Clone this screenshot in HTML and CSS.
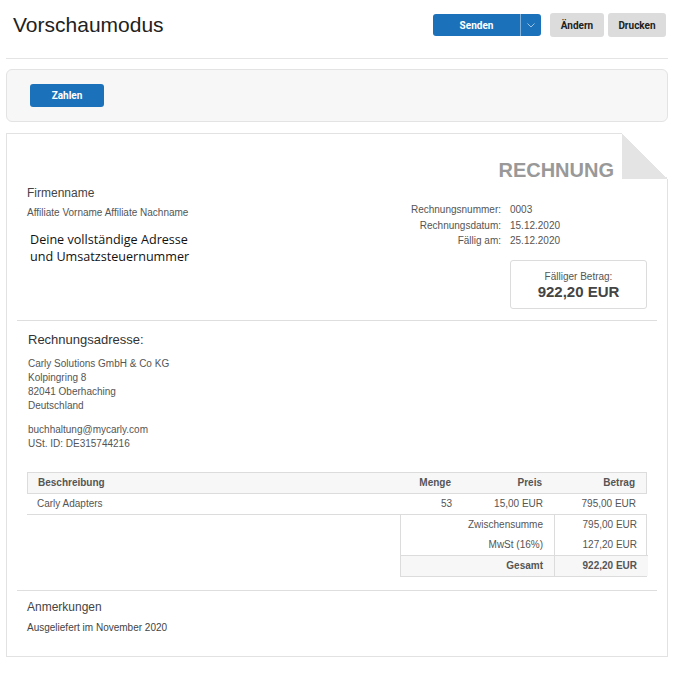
FILE: index.html
```html
<!DOCTYPE html>
<html lang="de">
<head>
<meta charset="utf-8">
<title>Vorschaumodus</title>
<link rel="stylesheet" href="styles.css">
</head>
<body>
<div class="page">
  <header class="topbar">
    <h1 class="title">Vorschaumodus</h1>
    <div class="actions">
      <div class="split">
        <button class="btn btn-primary split-main">Senden</button>
        <button class="btn btn-primary split-caret" aria-label="Mehr">
          <svg width="8" height="5" viewBox="0 0 8 5"><polyline points="0.5,0.5 4,4 7.5,0.5" fill="none" stroke="#9cc3e6" stroke-width="1"/></svg>
        </button>
      </div>
      <button class="btn btn-gray btn-aendern">Ändern</button>
      <button class="btn btn-gray btn-drucken">Drucken</button>
    </div>
  </header>

  <div class="paybar">
    <button class="btn btn-primary btn-pay">Zahlen</button>
  </div>

  <div class="invoice">
    <div class="fold"></div>
    <section class="sec sec-head">
      <div class="doc-title">RECHNUNG</div>
      <div class="head-cols">
        <div class="sender">
          <div class="company">Firmenname</div>
          <div class="affiliate">Affiliate Vorname Affiliate Nachname</div>
          <div class="address">Deine vollständige Adresse<br>und Umsatzsteuernummer</div>
        </div>
        <div class="meta">
          <div class="meta-label">Rechnungsnummer:</div><div class="meta-val">0003</div>
          <div class="meta-label">Rechnungsdatum:</div><div class="meta-val">15.12.2020</div>
          <div class="meta-label">Fällig am:</div><div class="meta-val">25.12.2020</div>
          <div class="due">
            <div class="due-label">Fälliger Betrag:</div>
            <div class="due-amount">922,20 EUR</div>
          </div>
        </div>
      </div>
    </section>

    <section class="sec sec-bill">
      <h2 class="sec-title">Rechnungsadresse:</h2>
      <div class="bill-lines">Carly Solutions GmbH &amp; Co KG<br>Kolpingring 8<br>82041 Oberhaching<br>Deutschland</div>
      <div class="bill-lines bill-extra">buchhaltung@mycarly.com<br>USt. ID: DE315744216</div>

      <div class="items">
        <div class="row row-head">
          <div class="c c-desc">Beschreibung</div>
          <div class="c c-num">Menge</div>
          <div class="c c-num">Preis</div>
          <div class="c c-num">Betrag</div>
        </div>
        <div class="row row-item">
          <div class="c c-desc">Carly Adapters</div>
          <div class="c c-num">53</div>
          <div class="c c-num">15,00 EUR</div>
          <div class="c c-num">795,00 EUR</div>
        </div>
      </div>
      <div class="totals">
        <div class="t-label">Zwischensumme</div><div class="t-val">795,00 EUR</div>
        <div class="t-label">MwSt (16%)</div><div class="t-val">127,20 EUR</div>
        <div class="t-label t-grand">Gesamt</div><div class="t-val t-grand">922,20 EUR</div>
      </div>
    </section>

    <section class="sec sec-notes">
      <h3 class="notes-title">Anmerkungen</h3>
      <div class="notes-text">Ausgeliefert im November 2020</div>
    </section>
  </div>
</div>
</body>
</html>
```

FILE: styles.css
```css
* { box-sizing: border-box; }
html, body { margin: 0; padding: 0; background: #fff; }
body { font-family: "Liberation Sans", Arial, sans-serif; color: #555; }

.page { padding: 0 8px 0 6px; }

.topbar {
  height: 59px;
  border-bottom: 1px solid #e4e4e4;
  display: flex;
  justify-content: space-between;
  align-items: flex-start;
  padding: 13px 2px 0 7px;
}
.title {
  margin: 0;
  font-weight: normal;
  font-size: 21px;
  line-height: 24px;
  color: #222;
}
.actions { display: flex; align-items: flex-start; }

.btn {
  border: 0;
  margin: 0;
  font-family: "Liberation Sans Narrow", "Roboto", "Liberation Sans", sans-serif;
  font-weight: bold;
  font-size: 10px;
  cursor: pointer;
  padding: 0;
}
.btn-primary { background: #1b72ba; color: #fff; }
.btn-gray { background: #dcdcdc; color: #222; border-radius: 3px; height: 24px; }

.split { display: flex; margin-top: 1px; margin-right: 9px; }
.split-main { width: 87px; height: 22px; border-radius: 3px 0 0 3px; }
.split-caret {
  width: 21px; height: 22px;
  border-radius: 0 3px 3px 0;
  border-left: 1px solid #7fb0dc;
  display: flex; align-items: center; justify-content: center;
}
.btn-aendern { width: 54px; margin-right: 4px; }
.btn-drucken { width: 58px; }

.paybar {
  margin-top: 10px;
  height: 53px;
  background: #f7f7f7;
  border: 1px solid #e3e3e3;
  border-radius: 6px;
  padding: 14px 0 0 23px;
}
.btn-pay { width: 74px; height: 23px; border-radius: 3px; font-size: 10px; }

.invoice {
  position: relative;
  margin-top: 11px;
  height: 524px;
  border: 1px solid #e2e2e2;
  padding: 0 10px;
}
.fold {
  position: absolute;
  top: -1px;
  right: -1px;
  width: 46px;
  height: 46px;
  background: linear-gradient(to top right, #e4e4e4 50%, #fff 50%);
}

.sec { padding: 0 10px; }
.sec + .sec { border-top: 1px solid #dedede; }

.sec-head { padding-top: 24px; padding-bottom: 11px; }
.doc-title {
  text-align: right;
  padding-right: 33px;
  font-size: 20px;
  line-height: 24px;
  font-weight: bold;
  color: #999;
}
.head-cols { display: flex; justify-content: space-between; margin-top: 3px; }
.company { font-size: 12px; line-height: 16px; color: #444; }
.affiliate { font-size: 10px; line-height: 12px; margin-top: 6px; color: #555; }
.address {
  margin-top: 12px;
  padding-left: 3px;
  font-family: "Open Sans", "Noto Sans", sans-serif;
  font-size: 12.6px;
  line-height: 17px;
  color: #111;
}

.meta {
  display: grid;
  grid-template-columns: auto 137px;
  column-gap: 9px;
  padding-top: 17px;
  font-size: 10px;
  line-height: 15.5px;
  color: #555;
}
.meta-label { text-align: right; }
.due {
  grid-column: 2;
  margin-top: 11px;
  height: 49px;
  border: 1px solid #dcdcdc;
  border-radius: 3px;
  text-align: center;
  padding-top: 10px;
}
.due-label { font-size: 10px; line-height: 12px; color: #555; }
.due-amount { font-size: 15px; line-height: 18px; font-weight: bold; color: #444; }

.sec-bill { padding-top: 10px; padding-bottom: 13px; }
.sec-title {
  margin: 0 0 0 1px;
  font-size: 13px;
  line-height: 18px;
  font-weight: normal;
  color: #333;
}
.bill-lines { margin: 8px 0 0 1px; font-size: 10px; line-height: 14px; color: #555; }
.bill-extra { margin-top: 10px; }

.items { margin-top: 21px; }
.row {
  display: grid;
  grid-template-columns: 1fr 80px 91px 93px;
  font-size: 10px;
}
.row-head {
  height: 22px;
  background: #f7f7f7;
  border: 1px solid #dcdcdc;
  font-weight: bold;
  color: #555;
}
.row-item { height: 21px; border-bottom: 1px solid #dcdcdc; }
.c { display: flex; align-items: center; }
.c-desc { padding-left: 10px; }
.c-num { justify-content: flex-end; padding-right: 11px; }

.totals {
  display: grid;
  grid-template-columns: 154px 93px;
  width: 247px;
  margin-left: auto;
  border: 1px solid #dcdcdc;
  border-top: 0;
  font-size: 10px;
  color: #555;
}
.t-label, .t-val {
  height: 20px;
  display: flex;
  align-items: center;
  justify-content: flex-end;
  padding-right: 11px;
}
.t-label { border-right: 1px solid #dcdcdc; }
.t-grand { background: #f7f7f7; border-top: 1px solid #dcdcdc; height: 21px; font-weight: bold; }

.sec-notes { padding-top: 8px; }
.notes-title { margin: 0; font-size: 12px; line-height: 16px; font-weight: normal; color: #444; }
.notes-text { margin-top: 7px; font-size: 10px; line-height: 12px; color: #444; }
```
